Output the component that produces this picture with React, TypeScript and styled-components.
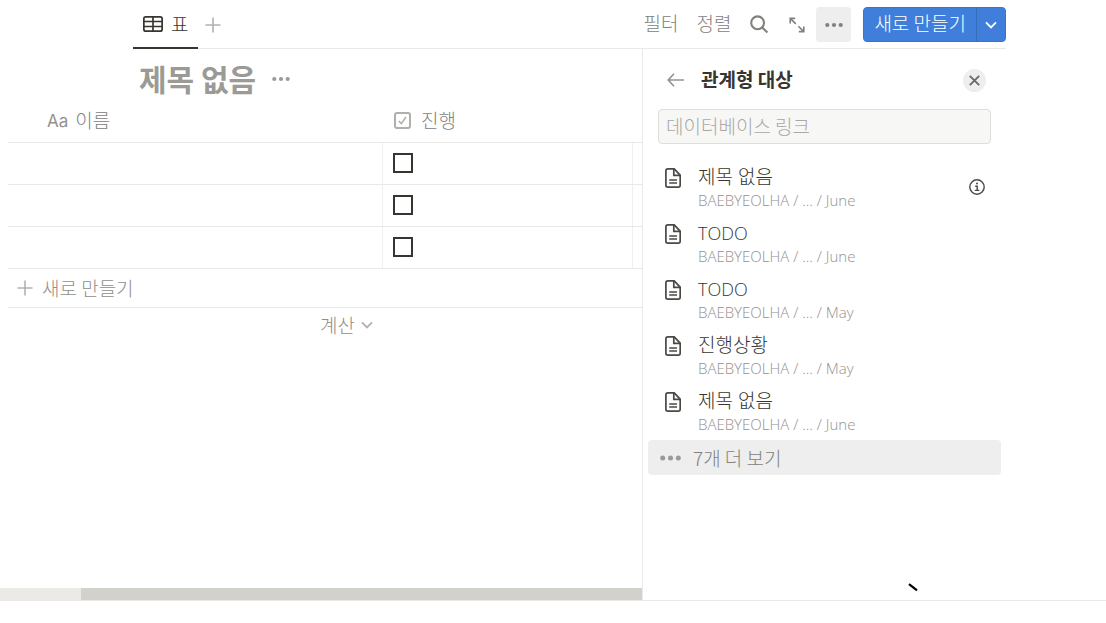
import React from 'react';
import styled, { createGlobalStyle } from 'styled-components';

const color = {
  ink: '#37352f',
  text: '#4a4944',
  muted: '#82817d',
  faint: '#9c9b97',
  line: '#e9e9e7',
  hover: '#eeeeee',
  blue: '#3f7fdb',
};

const GlobalStyle = createGlobalStyle`
  *, *::before, *::after { box-sizing: border-box; }
  body {
    margin: 0;
    background: #fff;
    color: ${color.ink};
    font-family: "Noto Sans CJK KR", "Open Sans", sans-serif;
    font-size: 19px;
    font-weight: 300;
    line-height: 24px;
  }
  button, input { font: inherit; color: inherit; }
  button { border: 0; padding: 0; background: none; cursor: pointer; white-space: nowrap; }
  svg { display: block; flex: none; }
`;

const Page = styled.div`
  display: flex;
  flex-direction: column;
  min-height: 100vh;
`;

const Header = styled.header`
  display: flex;
  justify-content: space-between;
  margin-right: 100px;
  padding-left: 133px;
  height: 49px;
  background: linear-gradient(${color.line}, ${color.line}) right bottom / calc(100% - 133px) 1px no-repeat;
`;

const Tabs = styled.nav`
  display: flex;
  align-items: center;
  gap: 7px;
`;

const Tab = styled.button`
  display: flex;
  align-items: center;
  gap: 8px;
  height: 49px;
  padding: 0 10px;
  border-bottom: 2px solid ${color.ink};
  color: ${color.ink};
`;

const Tools = styled.div`
  display: flex;
  align-items: center;
  color: ${color.muted};
`;

const TextTool = styled.button`
  padding: 0 9px 3px;
`;

const IconTool = styled.button<{ $active?: boolean }>`
  display: grid;
  place-items: center;
  width: ${p => (p.$active ? 35 : 38)}px;
  height: 35px;
  border-radius: 4px;
  background: ${p => (p.$active ? color.hover : 'transparent')};
`;

const SplitButton = styled.div`
  display: flex;
  height: 35px;
  margin-left: 12px;
  border: 1px solid #3a74c6;
  border-radius: 4px;
  background: ${color.blue};
  color: #fff;
  overflow: hidden;
`;

const CreateButton = styled.button`
  padding: 0 10px 3px;
`;

const CaretButton = styled.button`
  display: grid;
  place-items: center;
  width: 29px;
  border-left: 1px solid #366db9;
`;

const Main = styled.main`
  display: flex;
  flex: 1;
  margin-right: 100px;
`;

const Database = styled.section`
  display: flex;
  flex: 1;
  flex-direction: column;
  min-width: 0;
`;

const TitleRow = styled.div`
  display: flex;
  align-items: center;
  gap: 16px;
  height: 50px;
  padding: 10px 0 0 139px;
  color: #9b9a95;
`;

const Title = styled.h1`
  margin: 0;
  padding-bottom: 2px;
  font-size: 30px;
  font-weight: 700;
  line-height: 38px;
`;

const TableArea = styled.div`
  flex: 1;
  padding-left: 8px;
`;

const Table = styled.table`
  width: 100%;
  table-layout: fixed;
  border-collapse: collapse;
`;

const NameCol = styled.col`
  width: 374px;
`;

const CheckCol = styled.col`
  width: 250px;
`;

const HeadCell = styled.th<{ $inset: number }>`
  height: 43px;
  padding: 0 0 0 ${p => p.$inset}px;
  border-bottom: 1px solid ${color.line};
  font-weight: 300;
  text-align: left;
  color: ${color.muted};
`;

const HeadLabel = styled.span<{ $gap: number }>`
  display: flex;
  align-items: center;
  gap: ${p => p.$gap}px;
`;

const TypeMark = styled.span`
  padding-top: 2px;
  font-family: Inter, sans-serif;
  font-size: 17px;
  font-weight: 400;
  color: #93928e;
`;

const Cell = styled.td`
  height: 42px;
  padding: 0 0 0 10px;
  border-bottom: 1px solid ${color.line};

  & + & { border-left: 1px solid #efefed; }
`;

const CheckBox = styled.input`
  display: block;
  appearance: none;
  width: 20px;
  height: 20px;
  margin: 0;
  border: 2px solid ${color.ink};
`;

const FootCell = styled.td<{ $line?: boolean }>`
  height: ${p => (p.$line ? 39 : 36)}px;
  padding: 0 9px;
  border-bottom: ${p => (p.$line ? `1px solid ${color.line}` : '0')};
  color: #8f8e8a;
`;

const FootButton = styled.button<{ $end?: boolean }>`
  display: flex;
  align-items: center;
  gap: ${p => (p.$end ? 6 : 9)}px;
  margin-left: ${p => (p.$end ? 'auto' : '0')};
`;

const ScrollTrack = styled.div`
  display: flex;
  height: 12px;
  padding-left: 81px;
  background: #ebeae6;
`;

const ScrollThumb = styled.div`
  flex: 1;
  background: #d2d1cb;
`;

const Panel = styled.aside`
  flex: none;
  width: 364px;
  border-left: 1px solid ${color.line};
`;

const PanelHeader = styled.div`
  display: flex;
  align-items: center;
  gap: 17px;
  height: 60px;
  padding: 2px 20px 0 24px;
`;

const BackButton = styled.button`
  color: ${color.muted};
`;

const PanelTitle = styled.h2`
  flex: 1;
  margin: 0;
  padding-bottom: 2px;
  font-size: 19px;
  font-weight: 700;
  line-height: 24px;
`;

const CloseButton = styled.button`
  display: grid;
  place-items: center;
  width: 23px;
  height: 23px;
  border-radius: 50%;
  background: ${color.hover};
  color: #6b6a66;
`;

const Search = styled.input`
  display: block;
  width: 333px;
  height: 35px;
  margin: 0 0 15px 15px;
  padding: 0 7px 2px;
  border: 1px solid #dededc;
  border-radius: 4px;
  background: #f7f7f5;
  outline: 0;

  &::placeholder { color: #a9a8a5; opacity: 1; }
`;

const List = styled.ul`
  margin: 0 0 1px;
  padding: 0 21px 0 22px;
  list-style: none;
`;

const Item = styled.li`
  display: flex;
  align-items: center;
  height: 56px;
`;

const ItemButton = styled.button`
  display: flex;
  flex: 1;
  gap: 17px;
  text-align: left;
`;

const DocMark = styled.span`
  padding-top: 4px;
  color: ${color.text};
`;

const ItemName = styled.span<{ $latin: boolean }>`
  display: block;
  font-family: "Open Sans", "Noto Sans CJK KR", sans-serif;
  font-size: ${p => (p.$latin ? 18 : 19)}px;
  line-height: 26px;
`;

const ItemPath = styled.span`
  display: block;
  font-family: "Open Sans", sans-serif;
  font-size: 15px;
  line-height: 20px;
  color: #93928e;
`;

const MoreButton = styled.button`
  display: flex;
  align-items: center;
  gap: 12px;
  width: 353px;
  height: 35px;
  margin-left: 5px;
  padding-left: 12px;
  border-radius: 4px;
  background: ${color.hover};
  color: ${color.muted};
`;

const MoreDots = styled.span`
  color: #9b9a96;
`;

const Footer = styled.footer`
  height: 23px;
  border-top: 1px solid ${color.line};
`;

const PenStroke = styled.svg`
  position: absolute;
  left: 908px;
  top: 583px;
`;

const Plus = () => (
  <svg width="16" height="16" viewBox="0 0 16 16" stroke="#b3b2ae" strokeWidth="1.6">
    <path d="M8 0.5v15M0.5 8h15" />
  </svg>
);

const Dots = ({ width = 18, r = 2.1 }: { width?: number; r?: number }) => (
  <svg width={width} height="6" fill="currentColor">
    <circle cx={r + 0.2} cy="3" r={r} />
    <circle cx={width / 2} cy="3" r={r} />
    <circle cx={width - r - 0.2} cy="3" r={r} />
  </svg>
);

const Chevron = ({ tint = 'currentColor' }: { tint?: string }) => (
  <svg width="12" height="8" viewBox="0 0 12 8" fill="none" stroke={tint} strokeWidth="1.9">
    <path d="M1 1.4l5 5 5-5" />
  </svg>
);

const Grid = () => (
  <svg width="20" height="16" viewBox="0 0 20 16" fill="none" stroke="currentColor" strokeWidth="1.7">
    <rect x="0.85" y="0.85" width="18.3" height="14.3" rx="2" />
    <path d="M1 5.5h18M1 10.5h18M10 1v14" />
  </svg>
);

const Magnifier = () => (
  <svg width="19" height="19" viewBox="0 0 19 19" fill="none" stroke="currentColor" strokeWidth="2.1">
    <circle cx="7.6" cy="7.8" r="6.4" />
    <path d="M12.2 12.4l5.2 5.2" />
  </svg>
);

const Expand = () => (
  <svg width="16" height="16" viewBox="0 0 16 16" fill="none" stroke="currentColor" strokeWidth="1.6">
    <path d="M1.2 6.4V1.4h5M1.2 1.4l5.6 5.4M14.8 9.6v5H9.8M14.8 14.6L9.4 9.2" />
  </svg>
);

const Arrow = () => (
  <svg width="17" height="14" viewBox="0 0 17 14" fill="none" stroke="#93928e" strokeWidth="1.6">
    <path d="M7 0.8L1.2 7 7 13.2M1.2 7H17" />
  </svg>
);

const Cross = () => (
  <svg width="11" height="11" viewBox="0 0 11 11" stroke="currentColor" strokeWidth="1.9">
    <path d="M0.8 0.8l9.4 9.4M10.2 0.8L0.8 10.2" />
  </svg>
);

const TickBox = () => (
  <svg width="17" height="17" viewBox="0 0 17 17" fill="none" stroke="#b0afab" strokeWidth="2">
    <rect x="1" y="1" width="15" height="15" rx="2" />
    <path d="M4.8 9l2.5 2.6L12 5" strokeWidth="1.6" />
  </svg>
);

const Doc = () => (
  <svg width="16" height="20" viewBox="0 0 16 20" fill="none" stroke="currentColor" strokeWidth="1.7" strokeLinejoin="round">
    <path d="M2.8 0.9h6.4l6 6.2v10.1a1.9 1.9 0 0 1-1.9 1.9H2.8a1.9 1.9 0 0 1-1.9-1.9V2.8A1.9 1.9 0 0 1 2.8 0.9z" />
    <path d="M8.8 1v6.4H15" />
    <path d="M4.2 12h7.8M4.2 15h7.8" strokeWidth="1.3" />
  </svg>
);

const Info = () => (
  <svg width="16" height="16" viewBox="0 0 16 16" fill="none" stroke={color.text} strokeWidth="1.4">
    <circle cx="8" cy="8" r="7.2" />
    <path d="M6.2 7.2h2v4M5.8 11.4h4.6" />
    <circle cx="8" cy="4.6" r="1" fill={color.text} stroke="none" />
  </svg>
);

const pages = [
  { name: '제목 없음', month: 'June', info: true },
  { name: 'TODO', month: 'June' },
  { name: 'TODO', month: 'May' },
  { name: '진행상황', month: 'May' },
  { name: '제목 없음', month: 'June' },
];

const isLatin = (text: string) => /^[\x20-\x7e]+$/.test(text);

export default function App() {
  return (
    <Page>
      <GlobalStyle />
      <Header>
        <Tabs>
          <Tab><Grid />표</Tab>
          <button aria-label="보기 추가"><Plus /></button>
        </Tabs>
        <Tools>
          <TextTool>필터</TextTool>
          <TextTool>정렬</TextTool>
          <IconTool aria-label="검색"><Magnifier /></IconTool>
          <IconTool aria-label="확장"><Expand /></IconTool>
          <IconTool $active aria-label="옵션"><Dots /></IconTool>
          <SplitButton>
            <CreateButton>새로 만들기</CreateButton>
            <CaretButton aria-label="템플릿"><Chevron /></CaretButton>
          </SplitButton>
        </Tools>
      </Header>
      <Main>
        <Database>
          <TitleRow>
            <Title>제목 없음</Title>
            <button aria-label="데이터베이스 메뉴"><Dots /></button>
          </TitleRow>
          <TableArea>
            <Table>
              <colgroup>
                <NameCol />
                <CheckCol />
                <col />
              </colgroup>
              <thead>
                <tr>
                  <HeadCell $inset={39}><HeadLabel $gap={7}><TypeMark>Aa</TypeMark>이름</HeadLabel></HeadCell>
                  <HeadCell $inset={12}><HeadLabel $gap={10}><TickBox />진행</HeadLabel></HeadCell>
                  <HeadCell $inset={0} />
                </tr>
              </thead>
              <tbody>
                {[1, 2, 3].map(n => (
                  <tr key={n}>
                    <Cell />
                    <Cell><CheckBox type="checkbox" aria-label={`진행 ${n}`} /></Cell>
                    <Cell />
                  </tr>
                ))}
              </tbody>
              <tfoot>
                <tr>
                  <FootCell $line colSpan={3}>
                    <FootButton><Plus />새로 만들기</FootButton>
                  </FootCell>
                </tr>
                <tr>
                  <FootCell><FootButton $end>계산<Chevron tint="#b3b2ae" /></FootButton></FootCell>
                </tr>
              </tfoot>
            </Table>
          </TableArea>
          <ScrollTrack><ScrollThumb /></ScrollTrack>
        </Database>
        <Panel>
          <PanelHeader>
            <BackButton aria-label="뒤로"><Arrow /></BackButton>
            <PanelTitle>관계형 대상</PanelTitle>
            <CloseButton aria-label="닫기"><Cross /></CloseButton>
          </PanelHeader>
          <Search type="text" aria-label="데이터베이스 링크" placeholder="데이터베이스 링크" />
          <List>
            {pages.map((page, i) => (
              <Item key={i}>
                <ItemButton>
                  <DocMark><Doc /></DocMark>
                  <span>
                    <ItemName $latin={isLatin(page.name)}>{page.name}</ItemName>
                    <ItemPath>BAEBYEOLHA / ... / {page.month}</ItemPath>
                  </span>
                </ItemButton>
                {page.info && <Info />}
              </Item>
            ))}
          </List>
          <MoreButton><MoreDots><Dots width={21} r={2.5} /></MoreDots>7개 더 보기</MoreButton>
        </Panel>
      </Main>
      <Footer />
      <PenStroke width="10" height="9" stroke="#000" strokeWidth="2.2">
        <path d="M1 1.2L9 7.4" />
      </PenStroke>
    </Page>
  );
}
